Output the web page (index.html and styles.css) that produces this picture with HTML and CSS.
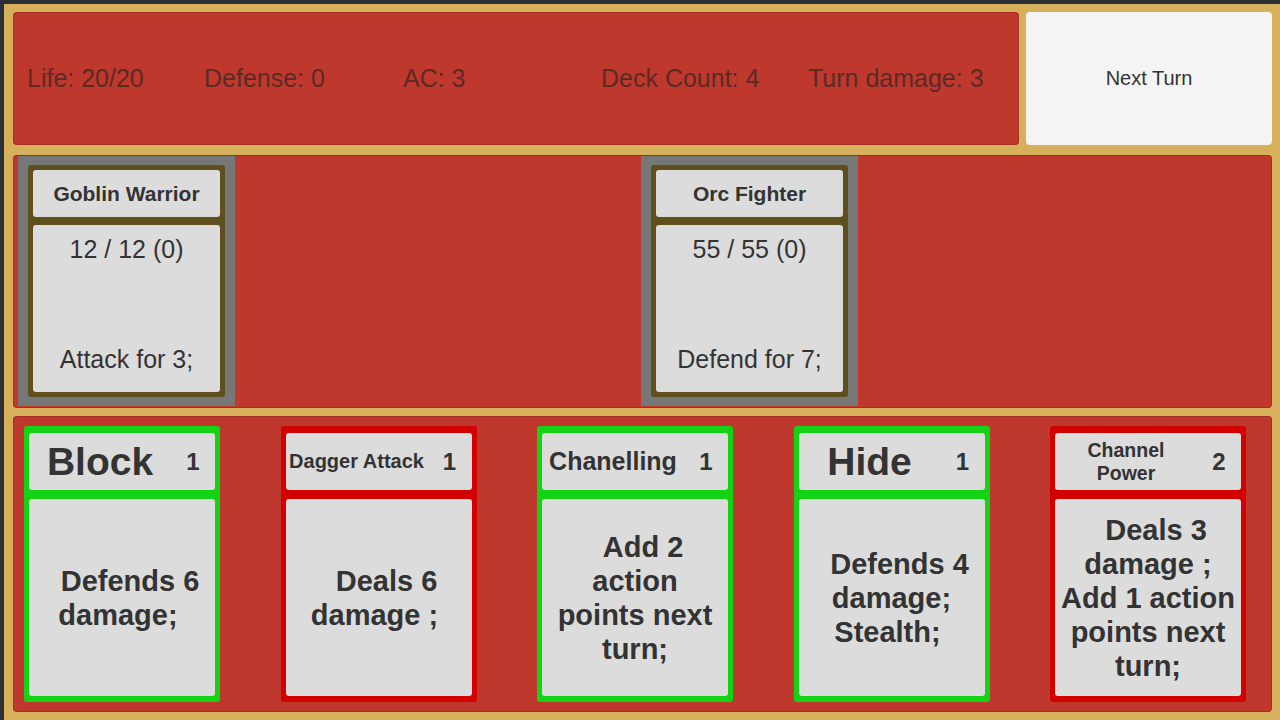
FILE: index.html
```html
<!DOCTYPE html>
<html lang="en">

<head>
    <meta charset="UTF-8">
    <meta name="viewport" content="width=device-width, initial-scale=1.0">
    <title>Card Battle</title>
    <link rel="stylesheet" href="styles.css">
</head>

<body>
    <div class="game">
        <div class="top-row">
            <div class="stats">
                <span class="stat stat-life">Life: 20/20</span>
                <span class="stat stat-def">Defense: 0</span>
                <span class="stat stat-ac">AC: 3</span>
                <span class="stat stat-deck">Deck Count: 4</span>
                <span class="stat">Turn damage: 3</span>
            </div>
            <div class="next-turn">Next Turn</div>
        </div>

        <div class="panel enemies">
            <div class="enemy">
                <div class="enemy-frame">
                    <div class="enemy-name">Goblin Warrior</div>
                    <div class="enemy-body">
                        <span>12 / 12 (0)</span>
                        <span>Attack for 3;</span>
                    </div>
                </div>
            </div>
            <div class="enemy slot-3">
                <div class="enemy-frame">
                    <div class="enemy-name">Orc Fighter</div>
                    <div class="enemy-body">
                        <span>55 / 55 (0)</span>
                        <span>Defend for 7;</span>
                    </div>
                </div>
            </div>
        </div>

        <div class="panel hand">
            <div class="card playable">
                <div class="card-head">
                    <div class="card-title title-xl">Block</div>
                    <div class="card-cost">1</div>
                </div>
                <div class="card-text">&nbsp;&nbsp;Defends 6<br>damage;&nbsp;</div>
            </div>
            <div class="card locked">
                <div class="card-head">
                    <div class="card-title title-sm">Dagger Attack</div>
                    <div class="card-cost">1</div>
                </div>
                <div class="card-text">&nbsp;&nbsp;Deals 6<br>damage ;&nbsp;</div>
            </div>
            <div class="card playable">
                <div class="card-head">
                    <div class="card-title title-md">Chanelling</div>
                    <div class="card-cost">1</div>
                </div>
                <div class="card-text">&nbsp;&nbsp;Add 2<br>action<br>points next<br>turn;</div>
            </div>
            <div class="card playable">
                <div class="card-head">
                    <div class="card-title title-xl">Hide</div>
                    <div class="card-cost">1</div>
                </div>
                <div class="card-text">&nbsp;&nbsp;Defends 4<br>damage;<br>Stealth;&nbsp;</div>
            </div>
            <div class="card locked">
                <div class="card-head">
                    <div class="card-title title-two">Channel<br>Power</div>
                    <div class="card-cost">2</div>
                </div>
                <div class="card-text">&nbsp;&nbsp;Deals 3<br>damage ;<br>Add 1 action<br>points next<br>turn;</div>
            </div>
        </div>
    </div>
</body>

</html>
```

FILE: styles.css
```css
* {
    margin: 0;
    padding: 0;
    box-sizing: border-box;
}

body {
    background: #2c3034;
    font-family: "Liberation Sans", Arial, sans-serif;
    color: #333;
    overflow: hidden;
}

.game {
    margin: 4px 0 0 4px;
    width: 1276px;
    height: 716px;
    padding: 8px 8px 8px 9px;
    background: #d7b05b;
    display: flex;
    flex-direction: column;
}

/* top bar */

.top-row {
    display: flex;
    gap: 7px;
    height: 133px;
}

.stats {
    width: 1006px;
    background: #be382d;
    border-radius: 4px;
    box-shadow: inset 0 0 0 1px rgba(120, 30, 20, 0.35);
    display: flex;
    align-items: center;
    padding-left: 14px;
    font-size: 25px;
    color: #5c2a24;
}

.stat {
    white-space: nowrap;
}

.stat-life {
    width: 177px;
}

.stat-def {
    width: 199px;
}

.stat-ac {
    width: 198px;
}

.stat-deck {
    width: 207px;
}

.next-turn {
    flex: 1;
    background: #f4f4f4;
    border-radius: 4px;
    display: flex;
    align-items: center;
    justify-content: center;
    font-size: 20px;
    color: #333;
}

/* panels */

.panel {
    background: #be382d;
    border-radius: 4px;
    box-shadow: inset 0 0 0 1px rgba(120, 30, 20, 0.35);
}

.enemies {
    margin-top: 10px;
    height: 253px;
    padding: 1px 5px;
    display: grid;
    grid-template-columns: repeat(4, 311.5px);
    align-items: start;
}

.enemy {
    width: 217px;
    height: 250px;
    background: #777;
    padding: 9px 10px;
}

.slot-3 {
    grid-column: 3;
}

.enemy-frame {
    height: 100%;
    background: #5e4f1d;
    border-radius: 3px;
    padding: 5px;
    display: flex;
    flex-direction: column;
    gap: 8px;
}

.enemy-name {
    height: 47px;
    background: #dcdcdc;
    border-radius: 3px;
    display: flex;
    align-items: center;
    justify-content: center;
    font-size: 21px;
    font-weight: bold;
}

.enemy-body {
    flex: 1;
    background: #dcdcdc;
    border-radius: 3px;
    display: flex;
    flex-direction: column;
    justify-content: space-between;
    align-items: center;
    padding: 10px 0 19px;
    font-size: 25px;
    line-height: 28px;
}

/* hand */

.hand {
    margin-top: 8px;
    height: 296px;
    padding: 10px 0 0 11px;
    display: flex;
    gap: 60.5px;
    align-items: flex-start;
}

.card {
    width: 196px;
    height: 276px;
    border-radius: 3px;
    padding: 7px 5px 6px;
    display: flex;
    flex-direction: column;
    gap: 9px;
}

.playable {
    background: #14d214;
}

.locked {
    background: #d30000;
}

.card-head {
    height: 57px;
    background: #dcdcdc;
    border-radius: 3px;
    display: flex;
    font-weight: bold;
}

.card-title {
    width: 142px;
    display: flex;
    align-items: center;
    justify-content: center;
    text-align: center;
    white-space: nowrap;
}

.title-xl {
    font-size: 39px;
}

.title-md {
    font-size: 25px;
}

.title-sm {
    font-size: 20px;
}

.title-two {
    font-size: 19.5px;
    line-height: 23px;
}

.card-cost {
    flex: 1;
    display: flex;
    align-items: center;
    justify-content: center;
    font-size: 24px;
}

.card-text {
    flex: 1;
    background: #dcdcdc;
    border-radius: 3px;
    display: flex;
    align-items: center;
    justify-content: center;
    text-align: center;
    white-space: nowrap;
    font-size: 29px;
    font-weight: bold;
    line-height: 34px;
}
```
